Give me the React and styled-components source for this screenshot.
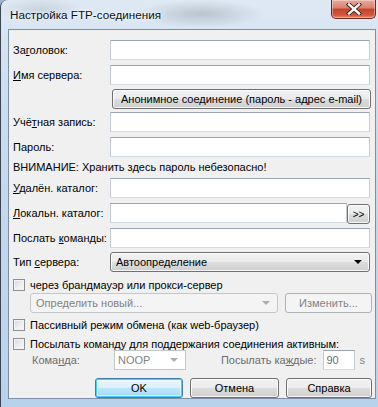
import React from "react";
import styled, { createGlobalStyle } from "styled-components";

const Global = createGlobalStyle`
  html, body { margin: 0; padding: 0; overflow: hidden; background: #9fb9d4; }
  * { box-sizing: border-box; }
`;

const Window = styled.div`
  width: 378px;
  height: 407px;
  display: flex;
  flex-direction: column;
  border-left: 1px solid #3a4452;
  border-top-left-radius: 7px;
  background:
    radial-gradient(ellipse 90px 20px at 200px 14px, rgba(120,130,140,0.35), transparent 70%),
    radial-gradient(ellipse 60px 18px at 40px 10px, rgba(150,160,170,0.3), transparent 70%),
    linear-gradient(to bottom, #dfe9f4 0%, #cddff0 20%, #c2d7ec 60%, #b9d2ec 100%);
  font-family: "Liberation Sans", Arial, sans-serif;
`;

const TitleBar = styled.div`
  height: 29px;
  display: flex;
  align-items: flex-start;
  flex-shrink: 0;
`;

const TitleText = styled.div`
  margin: 8px 0 0 9px;
  font-family: "Liberation Sans", Arial, sans-serif;
  font-size: 11.7px;
  color: #101010;
  text-shadow: 0 0 6px rgba(255,255,255,0.9), 0 0 3px rgba(255,255,255,0.9);
`;

const CloseButton = styled.div`
  margin-left: auto;
  margin-right: 2px;
  width: 45px;
  height: 19px;
  border: 1px solid #6b2a1e;
  border-top: none;
  border-radius: 0 0 5px 5px;
  background: linear-gradient(to bottom, #e9a99b 0%, #dc7f6c 45%, #c6412a 50%, #d15a3f 85%, #e48a6c 100%);
  box-shadow: inset 0 0 0 1px rgba(255,255,255,0.35);
  display: flex;
  align-items: center;
  justify-content: center;
`;

const Client = styled.div`
  margin: 0 2px 0 7px;
  height: 370px;
  border: 1px solid #7f8fa2;
  background: #f0f0f0;
  padding: 10px 5px 0 4px;
  display: flex;
  flex-direction: column;
  font-size: 11px;
  color: #000;
`;

const Row = styled.div`
  display: flex;
  align-items: center;
  height: ${(p) => p.$h || 20}px;
  margin-top: ${(p) => p.$mt || 0}px;
  padding-left: ${(p) => p.$pl || 0}px;
  margin-right: ${(p) => p.$mr || 0}px;
  gap: ${(p) => p.$gap || 0}px;
  justify-content: ${(p) => (p.$end ? "flex-end" : "flex-start")};
`;

const Label = styled.div`
  width: ${(p) => p.$w || 97}px;
  flex-shrink: 0;
  white-space: nowrap;
  color: ${(p) => (p.$disabled ? "#6d6d6d" : "#000")};
  text-align: ${(p) => (p.$right ? "right" : "left")};
  padding-right: ${(p) => (p.$right ? 6 : 0)}px;
  flex: ${(p) => (p.$grow ? 1 : "none")};
`;

const Key = styled.span`
  text-decoration: underline;
  text-underline-offset: 1px;
`;

const TextBox = styled.div`
  flex: ${(p) => (p.$w ? "none" : 1)};
  width: ${(p) => (p.$w ? `${p.$w}px` : "auto")};
  height: 20px;
  background: #fff;
  border: 1px solid #abadb3;
  border-top-color: #9aa4b3;
  border-left-color: #c6ccd5;
  border-right-color: #c6ccd5;
  border-bottom-color: #d5dbe3;
  color: #6d6d6d;
  padding: 2px 3px;
  display: flex;
  align-items: center;
  font-size: 11px;
`;

const Button = styled.div`
  width: ${(p) => (p.$w ? `${p.$w}px` : "auto")};
  flex: ${(p) => (p.$grow ? 1 : "none")};
  height: 20px;
  margin-top: ${(p) => p.$mt || 0}px;
  border: 1px solid ${(p) => (p.$default ? "#3c7fb1" : p.$disabled ? "#adb2b5" : "#707070")};
  border-radius: 3px;
  background: ${(p) =>
    p.$disabled
      ? "#f4f4f4"
      : p.$default
      ? "linear-gradient(to bottom, #eaf6fd 0%, #d9f0fc 50%, #bee6fd 51%, #a7d9f5 100%)"
      : "linear-gradient(to bottom, #f2f2f2 0%, #ebebeb 50%, #dddddd 51%, #cfcfcf 100%)"};
  box-shadow: ${(p) =>
    p.$default
      ? "inset 0 0 0 1px #48d1fd, inset 0 0 0 2px rgba(255,255,255,0.5)"
      : p.$disabled
      ? "none"
      : "inset 0 0 0 1px rgba(255,255,255,0.8)"};
  color: ${(p) => (p.$disabled ? "#838383" : "#000")};
  display: flex;
  align-items: center;
  justify-content: center;
  white-space: nowrap;
  font-size: ${(p) => p.$fs || 11}px;
`;

const Warning = styled.div`
  margin-top: 3px;
  height: 14px;
  line-height: 14px;
  white-space: nowrap;
`;

const Combo = styled.div`
  flex: ${(p) => (p.$w ? "none" : 1)};
  width: ${(p) => (p.$w ? `${p.$w}px` : "auto")};
  height: 20px;
  border: 1px solid ${(p) => (p.$disabled ? "#c2c7cc" : "#707070")};
  border-radius: ${(p) => (p.$flat ? 0 : 3)}px;
  background: ${(p) =>
    p.$disabled
      ? p.$flat
        ? "#fff"
        : "#f4f4f4"
      : "linear-gradient(to bottom, #f2f2f2 0%, #ebebeb 50%, #dddddd 51%, #cfcfcf 100%)"};
  box-shadow: ${(p) => (p.$disabled ? "none" : "inset 0 0 0 1px rgba(255,255,255,0.8)")};
  display: flex;
  align-items: center;
  padding: 0 6px 0 ${(p) => (p.$flat ? 3 : 5)}px;
  color: ${(p) => (p.$disabled ? "#838383" : "#000")};
  white-space: nowrap;
`;

const ComboText = styled.span`
  flex: 1;
  overflow: hidden;
`;

const Arrow = styled.span`
  width: 0;
  height: 0;
  border-left: 4px solid transparent;
  border-right: 4px solid transparent;
  border-top: 4px solid ${(p) => (p.$disabled ? "#a9aeb3" : "#000")};
  margin-right: 1px;
`;

const CheckRow = styled.div`
  display: flex;
  align-items: center;
  height: 12px;
  margin-top: ${(p) => p.$mt || 0}px;
  white-space: nowrap;
  gap: 5px;
`;

const CheckBox = styled.span`
  width: 12px;
  height: 12px;
  flex-shrink: 0;
  border: 1px solid #8e8f8f;
  background: linear-gradient(135deg, #d4d8dd 0%, #eceef0 55%, #f8f8f8 100%);
  box-shadow: inset 0 0 0 1px #f4f4f4;
`;

const Unit = styled.span`
  color: #838383;
  margin-left: 5px;
  margin-right: 5px;
`;

const CloseGlyph = () => (
  <svg width="16" height="12" viewBox="0 0 16 12">
    <path d="M3 1.5 L13 10.5 M13 1.5 L3 10.5" stroke="#3c1a14" strokeWidth="4.2" strokeLinecap="square" />
    <path d="M3 1.5 L13 10.5 M13 1.5 L3 10.5" stroke="#ffffff" strokeWidth="2.4" strokeLinecap="square" />
  </svg>
);

const Field = ({ label, mt }) => (
  <Row $mt={mt}>
    <Label>{label}</Label>
    <TextBox />
  </Row>
);

export default function App() {
  return (
    <>
      <Global />
      <Window>
        <TitleBar>
          <TitleText>Настройка FTP-соединения</TitleText>
          <CloseButton>
            <CloseGlyph />
          </CloseButton>
        </TitleBar>
        <Client>
          <Field label={<>За<Key>г</Key>оловок:</>} />
          <Field mt={5} label={<><Key>И</Key>мя сервера:</>} />
          <Row $mt={4} $pl={99} $mr={-1}>
            <Button $grow>Анонимное соединение (пароль - адрес e-mail)</Button>
          </Row>
          <Field mt={3} label={<>Учё<Key>т</Key>ная запись:</>} />
          <Field mt={5} label={<>Пароль:</>} />
          <Warning>ВНИМАНИЕ: Хранить здесь пароль небезопасно!</Warning>
          <Field mt={4} label={<><Key>У</Key>далён. каталог:</>} />
          <Row $mt={5}>
            <Label><Key>Л</Key>окальн. каталог:</Label>
            <TextBox />
            <Button $w={23} $mt={2} $fs={10}>&gt;&gt;</Button>
          </Row>
          <Field mt={5} label={<>Послать <Key>к</Key>оманды:</>} />
          <Row $mt={4}>
            <Label>Тип <Key>с</Key>ервера:</Label>
            <Combo>
              <ComboText>Автоопределение</ComboText>
              <Arrow />
            </Combo>
          </Row>
          <CheckRow $mt={7}>
            <CheckBox />
            через брандмауэр или прокси-сервер
          </CheckRow>
          <Row $mt={2} $pl={17} $mr={-2} $gap={7}>
            <Combo $disabled>
              <ComboText>Определить новый...</ComboText>
              <Arrow $disabled />
            </Combo>
            <Button $w={87} $disabled>Изменить...</Button>
          </Row>
          <CheckRow $mt={6}>
            <CheckBox />
            Пассивный режим обмена (как web-браузер)
          </CheckRow>
          <CheckRow $mt={7}>
            <CheckBox />
            Посылать команду для поддержания соединения активным:
          </CheckRow>
          <Row $pl={19} $mt={0}>
            <Label $w={82} $disabled>Кома<Key>н</Key>да:</Label>
            <Combo $w={72} $disabled $flat>
              <ComboText>NOOP</ComboText>
              <Arrow $disabled />
            </Combo>
            <Label $disabled $right $grow>Посылать ка<Key>ж</Key>дые:</Label>
            <TextBox $w={32}>90</TextBox>
            <Unit>s</Unit>
          </Row>
          <Row $mt={8} $mr={-2} $gap={7} $end>
            <Button $w={88} $default>OK</Button>
            <Button $w={89}>Отмена</Button>
            <Button $w={86}>Справка</Button>
          </Row>
        </Client>
      </Window>
    </>
  );
}
